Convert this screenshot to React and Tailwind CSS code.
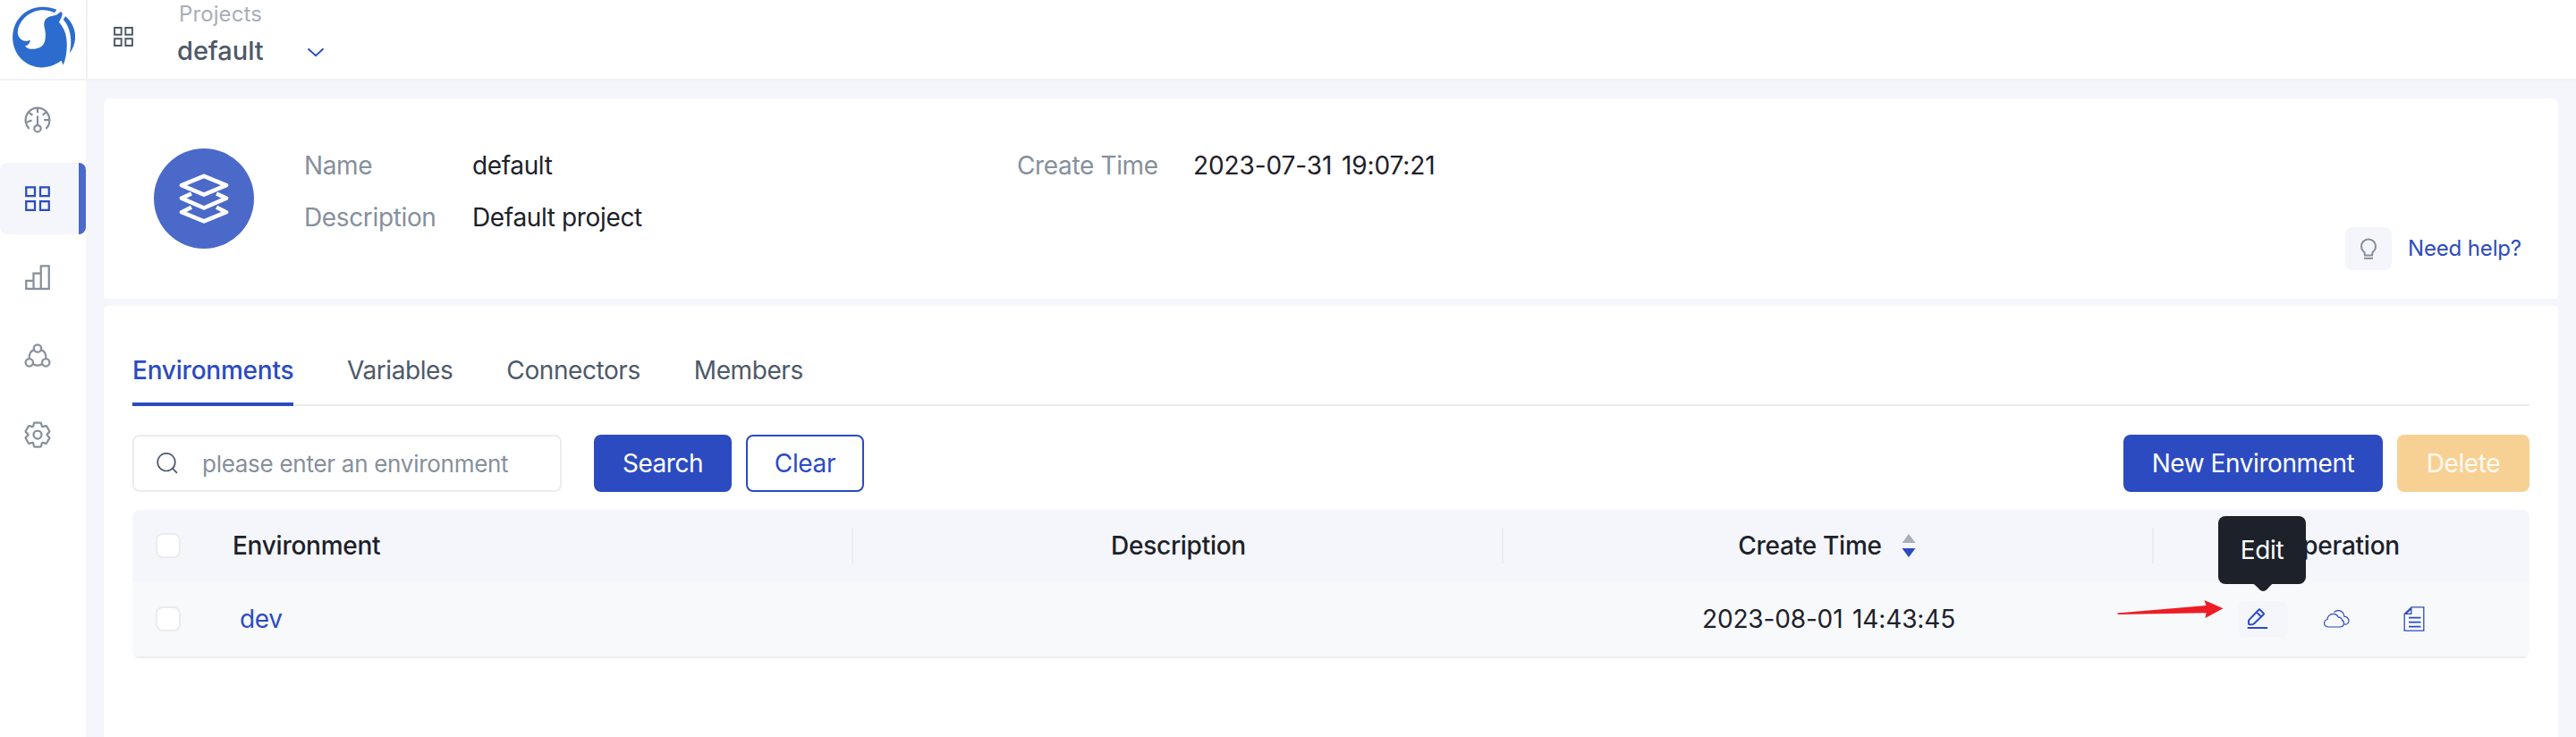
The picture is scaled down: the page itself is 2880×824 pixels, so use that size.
import React from "react";

const NAV_STROKE = 3;

function NavSvg({ children }) {
  return (
    <svg viewBox="0 0 48 48" className="h-9 w-9" fill="none" stroke="currentColor" strokeWidth={NAV_STROKE}>
      {children}
    </svg>
  );
}

const AppsPath = () => <path d="M7 7h13v13H7zM28 7h13v13H28zM7 28h13v13H7zM28 28h13v13H28z" />;

const navItems = [
  {
    id: "dashboard",
    icon: (
      <NavSvg>
        <path d="M36.6 37.3c3.7-3.7 5.3-8.7 5.2-13.3M41.8 24h-8.3M41.8 24c-.1-4.4-1.8-8.7-4.6-12M24 6c5.5 0 10.1 2.4 13.2 6M24 6c-5.7 0-10.4 2.6-13.5 6.4M24 6v7.5M37.2 12 31.5 17M10.5 12.4 16.5 17.3M10.5 12.4C7 16.7 5.4 22.500 6.500 28M11.400 37.300c-2.600-2.600-4.200-6-4.900-9.300M6.500 28l9-3.300M24 18v14" />
        <circle cx="24" cy="36.900" r="4.900" />
      </NavSvg>
    ),
  },
  { id: "projects", active: true, icon: <NavSvg><AppsPath /></NavSvg> },
  {
    id: "statistics",
    icon: <NavSvg><path d="M41 7H29v34h12V7ZM29 18H18v23h11V18ZM18 29H7v12h11V29Z" /></NavSvg>,
  },
  {
    id: "members",
    icon: (
      <NavSvg>
        <circle cx="24" cy="12.700" r="5.600" />
        <circle cx="11.700" cy="33.800" r="5.600" />
        <circle cx="36.300" cy="33.800" r="5.600" />
        <path d="M11.700 27.500a12.300 12.300 0 0 1 7-12.700M36.300 27.500a12.300 12.300 0 0 0-7-12.700M17 36a14 14 0 0 0 14 0" />
      </NavSvg>
    ),
  },
  {
    id: "settings",
    icon: (
      <NavSvg>
        <path d="M18.797 6.732A1 1 0 0 1 19.760 6h8.480a1 1 0 0 1 .964.732l1.285 4.628a1 1 0 0 0 1.213.7l4.651-1.200a1 1 0 0 1 1.116.468l4.240 7.344a1 1 0 0 1-.153 1.200L38.193 23.300a1 1 0 0 0 0 1.402l3.364 3.427a1 1 0 0 1 .153 1.200l-4.240 7.344a1 1 0 0 1-1.116.468l-4.650-1.200a1 1 0 0 0-1.214.7l-1.285 4.628a1 1 0 0 1-.964.732h-8.480a1 1 0 0 1-.963-.732L17.510 36.640a1 1 0 0 0-1.213-.7l-4.650 1.200a1 1 0 0 1-1.116-.468l-4.240-7.344a1 1 0 0 1 .153-1.200L9.809 24.700a1 1 0 0 0 0-1.402l-3.364-3.427a1 1 0 0 1-.153-1.200l4.240-7.344a1 1 0 0 1 1.116-.468l4.650 1.200a1 1 0 0 0 1.213-.7l1.286-4.628Z" />
        <circle cx="24" cy="24" r="6" />
      </NavSvg>
    ),
  },
];

function Logo() {
  return (
    <svg viewBox="42 20 210 206" className="h-[69px] w-[70px]" fill="#2d6ccf">
      <path d="M190 31C140 10 85 24 57 69C34 108 38 158 68 193C104 232 162 235 206 202L212 217C222 192 227 160 223 128C220 106 211 88 198 73C201 64 210 54 209 44C207 37 203 36 198 42C190 52 178 50 165 55C149 61 146 75 149 91C154 108 155 130 146 147C134 165 92 169 84 152C92 153 99 146 102 133C87 141 66 135 60 114C55 86 80 50 113 38C137 29 163 32 183 41Z" />
      <path d="M220 53C259 88 262 139 233 178C243 138 238 92 212 64Z" />
    </svg>
  );
}

function Checkbox() {
  return <span className="block h-7 w-7 rounded-lg border-2 border-[#ebecee] bg-white" />;
}

function Field({ label, value, labelWidth, valueClass = "" }) {
  return (
    <div className="flex h-[58px] items-center">
      <span className={labelWidth + " text-[#86909c]"}>{label}</span>
      <span className={"text-[#1d2129] " + valueClass}>{value}</span>
    </div>
  );
}

const tabs = ["Environments", "Variables", "Connectors", "Members"];

export default function App() {
  return (
    <div className="flex h-[824px] w-[2880px] flex-col overflow-hidden bg-[#f4f6fb] font-['Inter',sans-serif] text-[28px] leading-none tracking-[-0.36px] whitespace-nowrap">
      <header className="flex h-[90px] shrink-0 border-b-2 border-[#f1f2f4] bg-white">
        <div className="flex w-[98px] shrink-0 border-r-2 border-[#f1f2f4] pt-[7px] pl-[14px]">
          <Logo />
        </div>
        <svg viewBox="0 0 48 48" className="mt-[27px] ml-[26px] h-7 w-7" fill="none" stroke="#4e5969" strokeWidth="3.300">
          <AppsPath />
        </svg>
        <div className="ml-[46px] flex w-[145px] flex-col">
          <span className="mt-1 ml-[2px] text-[24px] leading-6 tracking-[0.1px] text-[#a9aeb8]">Projects</span>
          <span className="mt-[13px] text-[29px] font-medium leading-8 tracking-[-0.05px] text-[#4e5969]">default</span>
        </div>
        <svg viewBox="0 0 20 12" className="mt-[53px] h-3 w-5" fill="none" stroke="#2c4bc0" strokeWidth="1.900">
          <path d="M1.500 1.500 10 9.300l8.500-7.800" />
        </svg>
      </header>

      <div className="flex min-h-0 flex-1">
        <nav className="flex w-24 shrink-0 flex-col gap-2 bg-white pt-1">
          {navItems.map((item) => (
            <a
              key={item.id}
              className={
                item.active
                  ? "flex h-20 items-center overflow-hidden rounded-lg bg-[#f4f6fb] text-[#2c4bc0]"
                  : "flex h-20 items-center text-[#86909c]"
              }
            >
              <span className="ml-6 flex-1">{item.icon}</span>
              {item.active && <span className="h-20 w-2 bg-[#4b69c9]" />}
            </a>
          ))}
        </nav>

        <main className="flex flex-1 flex-col gap-2 pt-5 pr-5 pl-5">
          <section className="flex h-[224px] shrink-0 rounded-t-lg rounded-b-sm bg-white pr-10 pl-14">
            <span className="mt-14 flex h-28 w-28 items-center justify-center rounded-full bg-[#4b69c9]">
              <svg viewBox="0 0 56 56" className="h-14 w-14" fill="none" stroke="white" strokeWidth="4.600" strokeLinejoin="round">
                <path d="M28 2.800 53 13.200 28 23.600 3 13.200Z" />
                <path d="M14 22.500 3 27.600 28 38.500 53 27.600 42 22.500" />
                <path d="M14 37.800 3 43.200 28 53.400 53 43.200 42 37.800" />
              </svg>
            </span>
            <div className="mt-[46px] ml-14 w-[797px]">
              <Field label="Name" value="default" labelWidth="w-[188px]" />
              <Field label="Description" value="Default project" labelWidth="w-[188px]" />
            </div>
            <div className="mt-[46px] flex-1">
              <Field
                label="Create Time"
                value="2023-07-31 19:07:21"
                labelWidth="w-[197px]"
                valueClass="tracking-[-0.1px] [word-spacing:3px]"
              />
            </div>
            <div className="mt-36 flex h-12 items-center">
              <span className="flex h-12 w-[52px] items-center justify-center rounded-lg bg-[#f4f6fb]">
                <svg viewBox="0 0 24 28" className="h-7 w-6" fill="none" stroke="#86909c" strokeWidth="2">
                  <path d="M8 21.500 7.500 18C5.200 16.200 4 13.800 4 11.400A8 8 0 0 1 20 11.400C20 13.800 18.800 16.200 16.500 18L16 21.500Z" />
                  <path d="M7 24.800h10" />
                </svg>
              </span>
              <a className="ml-[18px] w-[128px] text-[24px] tracking-[-0.15px] text-[#2c4bc0]">Need help?</a>
            </div>
          </section>

          <section className="flex flex-1 flex-col rounded-t-sm bg-white px-8">
            <div className="mt-8 flex h-20 shrink-0 gap-[60px] border-b-2 border-[#ebecee]">
              {tabs.map((tab, i) => (
                <a
                  key={tab}
                  className={
                    i === 0
                      ? "-mb-0.5 flex w-[180px] items-center border-b-4 border-[#2c4bc0] pt-1 font-medium tracking-[-0.22px] text-[#2c4bc0]"
                      : "-mb-0.5 flex items-center border-b-4 border-transparent pt-1 tracking-[-0.42px] text-[#4e5969]"
                  }
                >
                  {tab}
                </a>
              ))}
            </div>

            <div className="mt-8 flex h-16 shrink-0">
              <div className="flex w-[480px] items-center rounded-lg border-2 border-[#ebecee]">
                <svg viewBox="0 0 26 26" className="ml-6 h-[26px] w-[26px]" fill="none" stroke="#4e5969" strokeWidth="1.700">
                  <circle cx="12" cy="11.700" r="9.800" />
                  <path d="m19 18.800 5 5" />
                </svg>
                <span className="ml-[26px] pt-0.5 text-[26px] tracking-[-0.28px] text-[#86909c]">please enter an environment</span>
              </div>
              <button className="ml-9 w-[154px] rounded-lg bg-[#2c4bc0] tracking-[-0.45px] text-white">Search</button>
              <button className="ml-4 w-[132px] rounded-lg border-2 border-[#2c4bc0] text-[#2c4bc0]">Clear</button>
              <button className="ml-auto w-[290px] rounded-lg bg-[#2c4bc0] tracking-[-0.43px] text-white">New Environment</button>
              <button className="ml-4 w-[148px] rounded-lg bg-[#f7d194] text-[#fffaf0]">Delete</button>
            </div>

            <div className="mt-5 shrink-0 overflow-hidden rounded-lg text-[#1d2129]">
              <div className="grid h-20 grid-cols-[80px_726px_727px_727px_420px] items-center bg-[#f4f6fb] font-medium tracking-[-0.26px]">
                <span className="pl-[26px]"><Checkbox /></span>
                <span className="flex h-10 items-center border-r-2 border-[#ebecee] pl-8">Environment</span>
                <span className="flex h-10 items-center justify-center border-r-2 border-[#ebecee] pl-0.5">Description</span>
                <span className="flex h-10 items-center justify-center border-r-2 border-[#ebecee]">
                  <span className="-ml-0.5">Create Time</span>
                  <svg viewBox="0 0 16 26" className="ml-[22px] h-[26px] w-4">
                    <path d="M8 0 15.500 10H.5Z" fill="#a9aeb8" />
                    <path d="M8 26 15.500 16H.5Z" fill="#2c4bc0" />
                  </svg>
                </span>
                <span className="text-center">Operation</span>
              </div>
              <div className="grid h-[86px] grid-cols-[80px_726px_727px_727px_420px] items-center border-b-2 border-[#ebecee] bg-[#f7f9fb]">
                <span className="pl-[26px]"><Checkbox /></span>
                <a className="pl-10 text-[#2c4bc0]">dev</a>
                <span />
                <span className="text-center tracking-[-0.15px] [word-spacing:3px]">2023-08-01 14:43:45</span>
                <div className="flex items-center text-[#2c4bc0]">
                  <span className="ml-[94px] flex h-10 w-14 items-center rounded-lg bg-[#f4f6fb] pl-[10px]">
                    <svg viewBox="0 0 24 26" className="h-[26px] w-6" fill="none" stroke="currentColor" strokeWidth="2" strokeLinejoin="round">
                      <path d="M2.200 14.400 13.300 2.700Q14 2 14.700 2.700L18.700 6.700Q19.400 7.400 18.700 8.100L7.800 18.400Q7 19.200 6 19.200H3.200Q2 19.200 2 18V15.500Q2 14.700 2.200 14.400ZM10.800 5.300 16.200 10.700" />
                      <path d="M.7 23h22.400" />
                    </svg>
                  </span>
                  <svg viewBox="0 0 30 22" className="ml-[39px] h-[22px] w-[30px]" fill="none" stroke="currentColor" strokeWidth="1.200">
                    <path d="M6.500 20C3.500 20 1.600 18.200 1.600 15.800C1.600 13.500 3 12 5 11.500C5.200 8 8 5.300 11.500 5.300C14.600 5.300 16.500 7 17.300 9.200C20 9 21.400 10.600 21.500 12.600C23.200 13.200 23.600 14.500 23.500 16C23.300 18.500 21.500 20 19 20Z" />
                    <path d="M12.500 3.700C14 2 16 1.500 18 1.700C21.500 2.200 23.500 5 23.800 8.200C27 8.500 29.300 11 29 13.500C28.700 16 26.500 17.500 24 17" />
                  </svg>
                  <svg viewBox="0 0 24 28" className="ml-[60px] h-7 w-6" fill="none" stroke="currentColor" strokeWidth="1.300">
                    <path d="M9 .8H22.800V27.200H1.200V8.500L9 .8ZM8.800 1V8.300H1.200M3 8 8.800 2.500" />
                    <path d="M6 12.600h13.500M6 17.600h13.500M6 22.600h13.500" strokeWidth="1.900" />
                  </svg>
                </div>
              </div>
            </div>
          </section>
        </main>
      </div>

      <div className="absolute top-[577px] left-[2480px] flex h-[76px] w-[98px] items-center justify-center rounded-lg bg-[#1d2129] text-white">
        Edit
        <svg viewBox="0 0 24 9" className="absolute top-[75px] left-[38px] h-[9px] w-6" fill="#1d2129">
          <path d="M0 0H24C20.500 1.500 19 4.500 16.500 7Q12.200 11 8 7C5.500 4.500 3.500 1.500 0 0Z" />
        </svg>
      </div>
      <svg viewBox="0 0 120 22" className="absolute top-[670px] left-[2366px] h-[22px] w-[120px]" fill="#ee1c25">
        <path d="M1 15.500 100.500 7 98.500 1 119.500 10.200 99.500 21 100.500 15.300 2 17Z" />
      </svg>
    </div>
  );
}
